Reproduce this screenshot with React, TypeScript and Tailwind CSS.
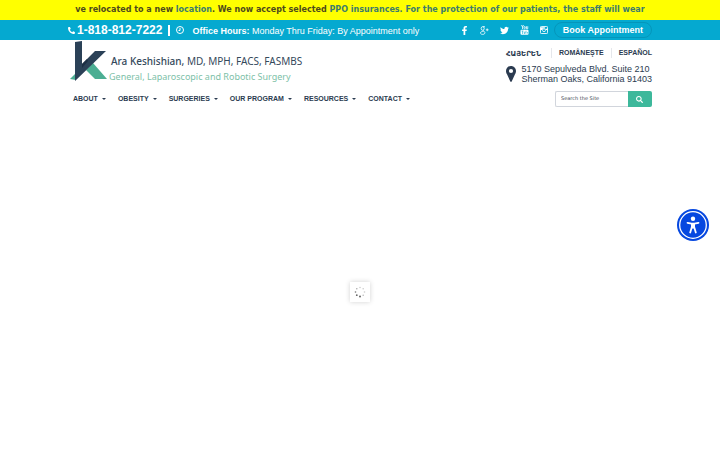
import React, { useState } from 'react'
import { FaPhone, FaFacebookF, FaTwitter, FaSearch } from 'react-icons/fa'

const navItems = ["ABOUT", "OBESITY", "SURGERIES", "OUR PROGRAM", "RESOURCES", "CONTACT"]

const Logo = () => (
  <svg viewBox="0 0 37 41" className="h-[41px] w-[37px] shrink-0" aria-hidden="true">
    <path d="M0 38 L6 32 L6 39 Z" fill="#4cae93" />
    <path d="M16 29 L23 22 L37 38 L25 38 Z" fill="#4cae93" />
    <path d="M5 1 L12 0 L12 23 L25 10 L36 10 L5 40 Z" fill="#2b4157" />
    <path d="M12 23 L12 27 L18 20 L17 18 Z" fill="#1d3045" />
  </svg>
)

const ClockIcon = () => (
  <svg viewBox="0 0 16 16" className="size-2 shrink-0" fill="none" stroke="currentColor" strokeWidth="2" aria-hidden="true">
    <circle cx="8" cy="8" r="7" />
    <path d="M8 4 V9 H5" />
  </svg>
)

const GooglePlusIcon = () => (
  <svg viewBox="0 0 20 20" className="h-[9px] w-[9px]" fill="none" stroke="currentColor" strokeWidth="1.8" aria-hidden="true">
    <ellipse cx="6" cy="5.5" rx="3.4" ry="4" />
    <path d="M6 1.5 H11 M7 9.5 C7 11 11 12 11 15 C11 20 1 19.5 1 15.5 C1 12.5 5 12 8 12" />
    <path d="M13 8.5 H19 M16 5.5 V11.5" />
  </svg>
)

const YoutubeIcon = () => (
  <svg viewBox="0 0 18 20" className="h-[10px] w-[9px]" fill="none" stroke="currentColor" strokeWidth="1.6" aria-hidden="true">
    <path d="M3 0 L5 4 L7 0 M5 4 V8" />
    <rect x="8" y="3" width="2.5" height="4.5" rx="1" />
    <path d="M13 2.5 V7.5 H15.5 V2.5" />
    <rect x="1" y="9.5" width="16" height="10" rx="2" fill="currentColor" stroke="none" />
    <path d="M3 12 H7 M5 12 V18 M8.5 13.5 V17 H10 V13.5 M12 11.5 V17 M15 14 V17" stroke="#05a9d0" strokeWidth="1.1" />
  </svg>
)

const InstagramIcon = () => (
  <svg viewBox="0 0 18 18" className="size-2" aria-hidden="true">
    <rect x="1" y="1" width="16" height="16" rx="2" fill="none" stroke="currentColor" strokeWidth="2" />
    <path d="M1 3 H11 V6 H17 V9 H13 A4 4 0 0 0 5 9 H1 Z" fill="currentColor" />
    <circle cx="9" cy="9.5" r="3.3" fill="none" stroke="currentColor" strokeWidth="1.8" />
  </svg>
)

const MarkerIcon = () => (
  <svg viewBox="0 0 10 16" className="mr-[5px] h-4 w-[10px]" aria-hidden="true">
    <path fillRule="evenodd" fill="currentColor" d="M5 0 C2.2 0 0 2.2 0 5 C0 6.5 0.6 7.5 1 8.3 L4.2 15.3 Q5 16.5 5.8 15.3 L9 8.3 C9.4 7.5 10 6.5 10 5 C10 2.2 7.8 0 5 0 Z M5 2.9 A2.1 2.1 0 1 1 5 7.1 A2.1 2.1 0 1 1 5 2.9 Z" />
  </svg>
)

const AccessIcon = () => (
  <svg viewBox="0 0 32 32" className="size-8" aria-hidden="true">
    <circle cx="16" cy="16" r="16" fill="#0648e0" />
    <circle cx="16" cy="16" r="13.3" fill="none" stroke="#fff" strokeWidth="1.3" />
    <circle cx="16" cy="9.8" r="2.2" fill="#fff" />
    <path d="M10.5 13.8 L14.5 14.6 H17.5 L21.5 13.8 M14.7 18.5 L13.2 23.5 M17.3 18.5 L18.8 23.5" stroke="#fff" strokeWidth="1.8" strokeLinecap="round" fill="none" />
    <path d="M14 14 H18 V19.5 H14 Z" fill="#fff" />
  </svg>
)

const Spinner = () => (
  <svg viewBox="0 0 12 12" className="size-3" aria-hidden="true">
    <g fill="#555">
      <circle cx="6" cy="1.5" r="0.8" opacity="0.3" />
      <circle cx="9.2" cy="2.8" r="0.8" opacity="0.3" />
      <circle cx="10.5" cy="6" r="0.8" opacity="0.3" />
      <circle cx="9.2" cy="9.2" r="0.8" opacity="0.4" />
      <circle cx="6" cy="10.5" r="0.9" />
      <circle cx="2.8" cy="9.2" r="0.9" opacity="0.9" />
      <circle cx="1.5" cy="6" r="0.8" opacity="0.8" />
      <circle cx="2.8" cy="2.8" r="0.8" opacity="0.5" />
    </g>
  </svg>
)

const App = () => {
  const [search, setSearch] = useState("")

  return (
    <div className="min-h-screen bg-white font-['Liberation_Sans',Arial,sans-serif] text-[#2b3b50]">
      <div className="h-5 bg-[#ffff00] px-[75px] pt-px">
        <div className="flex justify-center overflow-hidden whitespace-nowrap font-['DejaVu_Sans',sans-serif] text-[8px] leading-[18px] font-bold text-[#4d4a1c]">
          <p>
            ve relocated to a new <a href="#" className="text-[#3d7c6c]">location</a>. We now accept selected{" "}
            <a href="#" className="text-[#3d7c6c]">PPO insurances. For the protection of our patients, the staff will wear</a>
          </p>
        </div>
      </div>

      <div className="flex h-5 items-center justify-between bg-[#05a9d0] px-[68px] whitespace-nowrap text-white">
        <div className="flex items-center">
          <FaPhone className="mr-[2px] size-[7px] -scale-x-100" />
          <a href="tel:18188127222" className="text-[12px] leading-5 font-bold">1-818-812-7222</a>
          <span className="mx-[6px] h-[11px] w-[2px] bg-white" />
          <ClockIcon />
          <p className="ml-2 pt-px text-[9px] leading-5"><b>Office Hours:</b> Monday Thru Friday: By Appointment only</p>
        </div>
        <div className="flex items-center">
          <div className="mr-[6px] flex items-center gap-[11px]">
            <a href="#" aria-label="Facebook"><FaFacebookF className="size-[9px]" /></a>
            <a href="#" aria-label="Google Plus"><GooglePlusIcon /></a>
            <a href="#" aria-label="Twitter"><FaTwitter className="size-[9px]" /></a>
            <a href="#" aria-label="YouTube"><YoutubeIcon /></a>
            <a href="#" aria-label="Instagram"><InstagramIcon /></a>
          </div>
          <button className="h-4 rounded-full border border-[#0496bb] px-2 text-[9px] leading-none font-bold">Book Appointment</button>
        </div>
      </div>

      <header className="px-[68px] whitespace-nowrap">
        <div className="flex h-12 items-start justify-between">
          <a href="#" className="flex items-start pt-px pl-[2px]">
            <Logo />
            <span className="pt-3 pl-[2px] font-['Noto_Sans',sans-serif]">
              <span className="block pl-[2px] text-[10px] leading-4 text-[#34495b]"><span className="font-medium">Ara Keshishian,</span> MD, MPH, FACS, FASMBS</span>
              <span className="block text-[9px] leading-4 text-[#7dbfa8]">General, Laparoscopic and Robotic Surgery</span>
            </span>
          </a>
          <div className="flex flex-col items-end">
            <div className="flex items-center pt-2 text-[7px] leading-[10px] font-bold">
              <a href="#" className="pt-[2px] pr-[10px] font-['DejaVu_Sans',sans-serif] leading-2">ՀԱՅԵՐԵՆ</a>
              <a href="#" className="border-l border-gray-200 px-[7px]">ROMÂNEŞTE</a>
              <a href="#" className="border-l border-gray-200 pl-[7px]">ESPAÑOL</a>
            </div>
            <div className="flex items-center pt-[6px]">
              <MarkerIcon />
              <address className="text-[9px] leading-[10px] not-italic">5170 Sepulveda Blvd. Suite 210<br />Sherman Oaks, California 91403</address>
            </div>
          </div>
        </div>

        <div className="flex items-center justify-between pt-[3px]">
          <nav className="flex gap-3 pl-[5px] text-[7px] leading-4 font-bold">
            {navItems.map((item) => (
              <a key={item} href="#" className="flex items-center gap-1">
                {item}
                <span className="border-x-2 border-t-2 border-x-transparent border-t-[#2b3b50]" />
              </a>
            ))}
          </nav>
          <form className="flex h-4 w-[97px]" onSubmit={(e) => e.preventDefault()}>
            <input
              className="min-w-0 flex-1 rounded-l-xs border border-r-0 border-gray-300 px-[5px] font-['DejaVu_Sans',sans-serif] text-[5px] placeholder:text-[#3d4854] focus:outline-none"
              type="text"
              aria-label="Search the Site"
              placeholder="Search the Site"
              value={search}
              onChange={(e) => setSearch(e.target.value)}
            />
            <button aria-label="Search" className="flex w-6 items-center justify-center rounded-r-xs bg-[#3db89b] pr-[2px] text-white">
              <FaSearch className="size-[7px]" />
            </button>
          </form>
        </div>
      </header>

      <main className="flex justify-center pt-[175px]">
        <div role="status" aria-label="Loading" className="flex size-5 items-center justify-center bg-white shadow-[0_0_5px_rgba(0,0,0,0.18)]">
          <Spinner />
        </div>
      </main>

      <button aria-label="Accessibility" className="fixed top-1/2 right-[11px] -translate-y-1/2">
        <AccessIcon />
      </button>
    </div>
  )
}

export default App
